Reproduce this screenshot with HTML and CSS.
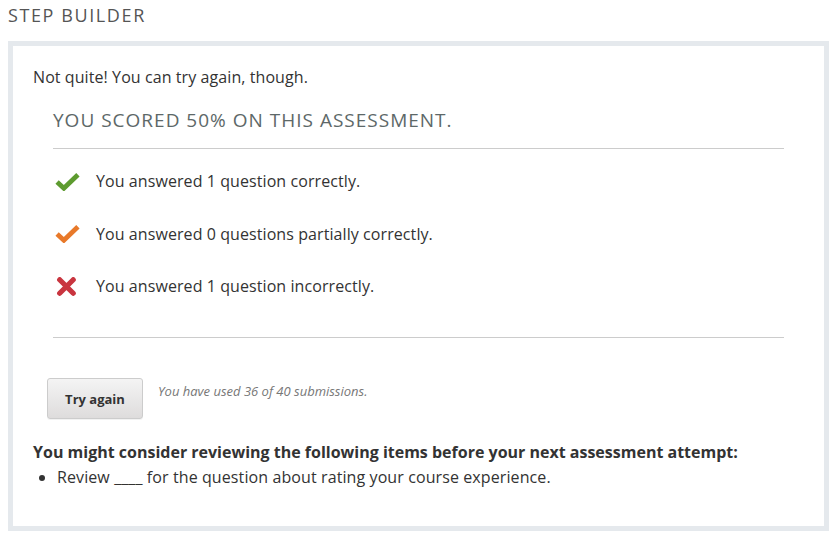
FILE: index.html
```html
<!DOCTYPE html>
<html>
<head>
<meta charset="utf-8">
<link rel="stylesheet" href="styles.css">
</head>
<body>
<h2 class="title">STEP BUILDER</h2>
<div class="panel">
  <p class="message">Not quite! You can try again, though.</p>
  <div class="assessment">
    <h3 class="score">YOU SCORED 50% ON THIS ASSESSMENT.</h3>
    <ul class="results">
      <li class="result">
        <svg class="icon" viewBox="0 0 24 18" width="25" height="19"><path d="M2 9.5 L8.5 15.5 L22 2.5" fill="none" stroke="#5d9b2f" stroke-width="4.6" stroke-linecap="butt" stroke-linejoin="miter"/></svg>
        <span>You answered 1 question correctly.</span>
      </li>
      <li class="result">
        <svg class="icon" viewBox="0 0 24 18" width="25" height="19"><path d="M2 9.5 L8.5 15.5 L22 2.5" fill="none" stroke="#e8792a" stroke-width="4.6" stroke-linecap="butt" stroke-linejoin="miter"/></svg>
        <span>You answered 0 questions partially correctly.</span>
      </li>
      <li class="result">
        <svg class="icon" viewBox="0 0 24 18" width="25" height="19"><path d="M4.5 2.5 L17.5 15.5 M17.5 2.5 L4.5 15.5" fill="none" stroke="#c9353f" stroke-width="5" stroke-linecap="round"/></svg>
        <span>You answered 1 question incorrectly.</span>
      </li>
    </ul>
  </div>
  <div class="actions">
    <button class="btn">Try again</button>
    <span class="attempts">You have used 36 of 40 submissions.</span>
  </div>
  <p class="review-title">You might consider reviewing the following items before your next assessment attempt:</p>
  <ul class="review-list">
    <li>Review ____ for the question about rating your course experience.</li>
  </ul>
</div>
</body>
</html>
```
FILE: styles.css
```css
html, body {
  margin: 0;
  padding: 0;
  background: #fff;
}
body {
  margin: 8px;
  font-family: "Open Sans", sans-serif;
  color: #333;
}
.title {
  margin: 0 0 19px 0;
  font-size: 18px;
  line-height: 14px;
  font-weight: 400;
  letter-spacing: 1.6px;
  color: #555;
}
.panel {
  border: 5px solid #e5e9ed;
  box-sizing: border-box;
  height: 490px;
  padding: 20px 20px 0 20px;
}
.message {
  margin: 0;
  font-size: 16px;
  line-height: 22px;
  color: #333;
  letter-spacing: 0.08px;
}
.assessment {
  margin: 0 20px;
}
.score {
  margin: 20px 0 0 0;
  font-size: 19px;
  line-height: 24px;
  font-weight: 400;
  letter-spacing: 1px;
  color: #5d6868;
  padding-bottom: 16px;
  border-bottom: 1px solid #ccc;
}
.results {
  list-style: none;
  margin: 0;
  padding: 21px 0 40px 2px;
  border-bottom: 1px solid #ccc;
  display: flex;
  flex-direction: column;
  gap: 30.5px;
}
.result {
  display: flex;
  align-items: center;
  gap: 16px;
  font-size: 16px;
  line-height: 22px;
  letter-spacing: 0.08px;
}
.icon {
  flex: none;
}
.actions {
  display: flex;
  align-items: flex-start;
  gap: 15px;
  margin: 40px 0 0 14px;
}
.btn {
  width: 96px;
  height: 41px;
  border: 1px solid #ccc;
  border-radius: 3px;
  background: linear-gradient(#f4f4f4, #dedcdc);
  font-family: "Open Sans", sans-serif;
  font-weight: 700;
  font-size: 13px;
  color: #333;
  padding: 0;
  box-shadow: 0 1px 0 rgba(0,0,0,0.05);
}
.attempts {
  font-size: 13px;
  font-style: italic;
  color: #777;
  line-height: 16px;
  margin-top: 5px;
}
.review-title {
  margin: 22px 0 0 0;
  font-size: 16px;
  font-weight: 700;
  line-height: 22px;
  color: #333;
}
.review-list {
  margin: 3px 0 0 0;
  padding-left: 24px;
  font-size: 16px;
  line-height: 22px;
  letter-spacing: 0.1px;
}
```
